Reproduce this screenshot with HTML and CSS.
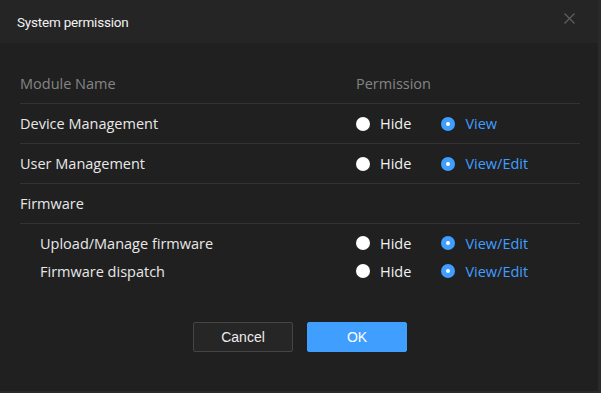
FILE: index.html
```html
<!DOCTYPE html>
<html lang="en">
<head>
  <meta charset="UTF-8">
  <title>System permission</title>
  <link rel="stylesheet" href="styles.css">
</head>
<body>

  <div class="dialog">
    <div class="dialog-header">
      <span class="dialog-title">System permission</span>
      <svg class="close" width="11" height="11" viewBox="0 0 11 11">
        <path d="M0.5 0.5L10.5 10.5M10.5 0.5L0.5 10.5" stroke="#5f5f5f" stroke-width="1.2"/>
      </svg>
    </div>

    <div class="dialog-body">
      <div class="row head">
        <div class="name">Module Name</div>
        <div class="perm">Permission</div>
      </div>

      <div class="row">
        <div class="name">Device Management</div>
        <div class="perm">
          <label class="radio"><span class="dot"></span>Hide</label>
          <label class="radio checked"><span class="dot"></span>View</label>
        </div>
      </div>

      <div class="row">
        <div class="name">User Management</div>
        <div class="perm">
          <label class="radio"><span class="dot"></span>Hide</label>
          <label class="radio checked"><span class="dot"></span>View/Edit</label>
        </div>
      </div>

      <div class="row">
        <div class="name">Firmware</div>
      </div>

      <div class="group">
        <div class="row sub">
          <div class="name">Upload/Manage firmware</div>
          <div class="perm">
            <label class="radio"><span class="dot"></span>Hide</label>
            <label class="radio checked"><span class="dot"></span>View/Edit</label>
          </div>
        </div>
        <div class="row sub">
          <div class="name">Firmware dispatch</div>
          <div class="perm">
            <label class="radio"><span class="dot"></span>Hide</label>
            <label class="radio checked"><span class="dot"></span>View/Edit</label>
          </div>
        </div>
      </div>
    </div>

    <div class="dialog-footer">
      <button class="btn">Cancel</button>
      <button class="btn primary">OK</button>
    </div>
  </div>

</body>
</html>
```

FILE: styles.css
```css
body {
  margin: 0;
  background: #2a2a2a;
  font-family: 'Open Sans', sans-serif;
  font-size: 14.5px;
  color: #e8e8e8;
}

.dialog {
  width: 598px;
  height: 391px;
  background: #202020;
  display: flex;
  flex-direction: column;
}

.dialog-header {
  height: 43px;
  background: #252525;
  display: flex;
  align-items: center;
  justify-content: space-between;
  padding: 0 23px 0 17px;
}

.dialog-title {
  color: #f2f2f2;
  font-family: Roboto, sans-serif;
  font-size: 13.5px;
  letter-spacing: -0.2px;
}

.close {
  margin-top: -6px;
}

.dialog-body {
  padding: 21px 18px 0 20px;
}

.row {
  display: flex;
  align-items: center;
  height: 40px;
  border-bottom: 1px solid #333;
  box-sizing: border-box;
}

.row.head {
  color: #858585;
}

.name {
  width: 336px;
}

.perm {
  display: flex;
  align-items: center;
}

.group {
  padding: 5px 0 7px;
}

.group .row.sub {
  height: 28px;
  border-bottom: none;
}

.row.sub .name {
  padding-left: 20px;
  width: 316px;
}

.radio {
  display: flex;
  align-items: center;
  margin-right: 30px;
  color: #f2f2f2;
}

.dot {
  width: 14px;
  height: 14px;
  border-radius: 50%;
  background: #fff;
  margin-right: 10px;
  box-sizing: border-box;
}

.radio.checked {
  color: #409eff;
}

.radio.checked .dot {
  background: #409eff;
  position: relative;
}

.radio.checked .dot::after {
  content: "";
  position: absolute;
  left: 5px;
  top: 5px;
  width: 4px;
  height: 4px;
  border-radius: 50%;
  background: #fff;
}

.dialog-footer {
  display: flex;
  justify-content: center;
  gap: 14px;
  padding: 30px 0 0 2px;
}

.btn {
  width: 100px;
  height: 30px;
  border-radius: 2px;
  border: 1px solid #454545;
  background: #262626;
  color: #ececec;
  font-family: 'Liberation Sans', sans-serif;
  font-size: 14px;
  cursor: pointer;
}

.btn.primary {
  background: #409eff;
  border-color: #409eff;
  color: #fff;
}
```
